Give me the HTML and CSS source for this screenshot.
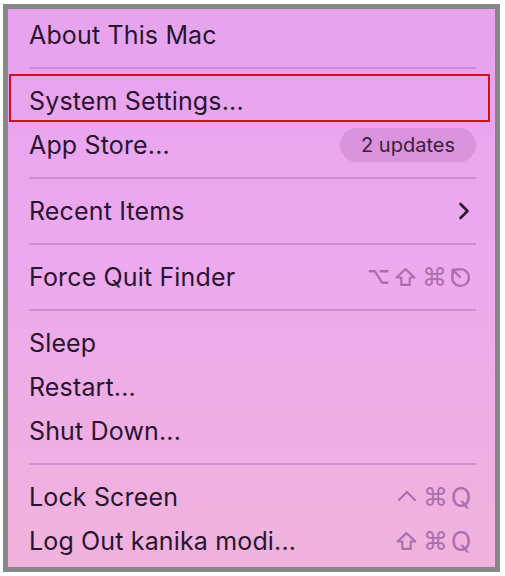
FILE: index.html
```html
<!DOCTYPE html>
<html lang="en">

<head>
  <meta charset="UTF-8">
  <meta name="viewport" content="width=device-width, initial-scale=1.0">
  <title>Apple menu</title>
  <link rel="stylesheet" href="styles.css">
</head>

<body>
  <div class="menu">
    <div class="item"><span class="label">About This Mac</span></div>
    <div class="separator"></div>
    <div class="item"><span class="label">System Settings...</span></div>
    <div class="item">
      <span class="label">App Store...</span>
      <span class="badge">2 updates</span>
    </div>
    <div class="separator"></div>
    <div class="item">
      <span class="label">Recent Items</span>
      <svg class="chevron" width="12" height="18" viewBox="0 0 12 18">
        <path d="M2.5 2 L9.5 9 L2.5 16" fill="none" stroke="#2a1430" stroke-width="2.6" stroke-linecap="round" stroke-linejoin="round"/>
      </svg>
    </div>
    <div class="separator"></div>
    <div class="item">
      <span class="label">Force Quit Finder</span>
      <span class="keys">
        <!-- option -->
        <svg class="key-icon" width="21" height="22" viewBox="0 0 20 20">
          <path d="M1.5 4.5 H6.5 L13.5 15.5 H18.5 M12 4.5 H18.5" fill="none" stroke="currentColor" stroke-width="2.2" stroke-linecap="round" stroke-linejoin="round"/>
        </svg>
        <!-- shift -->
        <svg class="key-icon" width="21" height="22" viewBox="0 0 20 20">
          <path d="M10 2.5 L18.5 10.5 H14 V17.5 H6 V10.5 H1.5 Z" fill="none" stroke="currentColor" stroke-width="2" stroke-linejoin="round"/>
        </svg>
        <span class="key">⌘</span>
        <!-- escape -->
        <svg class="key-icon" width="23" height="23" viewBox="0 0 22 22">
          <path d="M8.6 3.4 A8 8 0 1 1 3.4 8.6" fill="none" stroke="currentColor" stroke-width="2.2" stroke-linecap="round"/>
          <path d="M3.5 3.5 L10.5 10.5 M3.5 3.5 V8.5 M3.5 3.5 H8.5" fill="none" stroke="currentColor" stroke-width="2.2" stroke-linecap="round"/>
        </svg>
      </span>
    </div>
    <div class="separator"></div>
    <div class="item"><span class="label">Sleep</span></div>
    <div class="item"><span class="label">Restart...</span></div>
    <div class="item"><span class="label">Shut Down...</span></div>
    <div class="separator"></div>
    <div class="item">
      <span class="label">Lock Screen</span>
      <span class="keys">
        <!-- control -->
        <svg class="key-icon" width="20" height="20" viewBox="0 0 20 20">
          <path d="M2 13 L10 5 L18 13" fill="none" stroke="currentColor" stroke-width="2.2" stroke-linecap="round" stroke-linejoin="round"/>
        </svg>
        <span class="key">⌘</span><span class="key letter">Q</span>
      </span>
    </div>
    <div class="item">
      <span class="label">Log Out kanika modi...</span>
      <span class="keys">
        <svg class="key-icon" width="21" height="22" viewBox="0 0 20 20">
          <path d="M10 2.5 L18.5 10.5 H14 V17.5 H6 V10.5 H1.5 Z" fill="none" stroke="currentColor" stroke-width="2" stroke-linejoin="round"/>
        </svg>
        <span class="key">⌘</span><span class="key letter">Q</span>
      </span>
    </div>

    <!-- annotation box around System Settings -->
    <div class="highlight"></div>
  </div>
</body>

</html>
```

FILE: styles.css
```css
body {
  margin: 0;
  padding: 4px 5px 4px 3px;
  background-color: #ffffff;
  font-family: Inter, "Noto Sans", sans-serif;
  color: #2a1430;
}

.menu {
  position: relative;
  border: 5px solid #878787;
  padding: 4px 19px 4px 21px;
  background: linear-gradient(180deg, #e6a3ee 0%, #eda9ee 45%, #f0b3dc 100%);
}

.item {
  height: 44px;
  display: flex;
  align-items: center;
  justify-content: space-between;
}

.label {
  font-size: 25px;
  letter-spacing: 0.15px;
}

.separator {
  height: 22px;
  display: flex;
  align-items: center;
}

.separator::before {
  content: "";
  flex: 1;
  height: 2px;
  background-color: rgba(170, 80, 175, 0.35);
}

.badge {
  width: 136px;
  height: 34px;
  border-radius: 17px;
  background-color: rgba(160, 80, 160, 0.22);
  font-size: 20px;
  display: flex;
  align-items: center;
  justify-content: center;
  color: #3a1f3c;
}

.chevron {
  margin-right: 6px;
}

.keys {
  display: flex;
  align-items: center;
  gap: 6px;
  color: #ac6fae;
  margin-right: 4px;
}

.key {
  font-family: "DejaVu Sans", sans-serif;
  font-size: 25px;
  line-height: 1;
  width: 21px;
  text-align: center;
}

.key.letter {
  font-family: Inter, sans-serif;
  font-size: 27px;
  width: 22px;
}

.highlight {
  position: absolute;
  left: 1px;
  top: 65px;
  width: 477px;
  height: 44px;
  border: 2px solid #d0101e;
}
```
